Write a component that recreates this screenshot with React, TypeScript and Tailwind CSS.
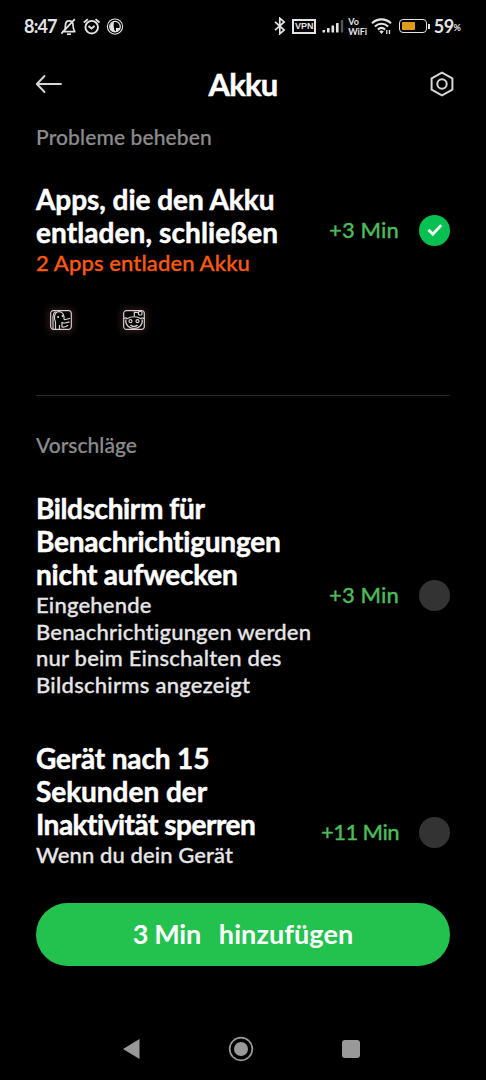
import type { ReactNode } from "react";

function StatusBar() {
  return (
    <div className="flex h-[52px] items-center pl-[24px] pr-[25px] text-[#e4e4e4]">
      <span className="w-[36px] text-[18px] font-bold tracking-[-0.8px]">8:47</span>
      <svg width="66" height="20" viewBox="60 15 66 20" fill="none" stroke="currentColor" strokeWidth="1.7" className="shrink-0">
        <path d="M62 30.600h13.500M64 30.500c1.300-1.600 1.400-3 1.400-5.700 0-3.300 1.200-4.900 3.700-4.900s4 1.600 4 4.900c0 2.700.4 4.100 1.700 5.700M61.300 32.700 74.800 18.200" />
        <path d="M67 33.200h4" strokeWidth="1.700" />
        <circle cx="91.700" cy="26.200" r="6.300" strokeWidth="1.900" />
        <path d="m88.500 25 3 2.500 3-2.500M83.800 21.500l4-3.400M99.500 21.500l-4-3.400" strokeWidth="1.900" />
        <circle cx="115" cy="25.600" r="7.600" strokeWidth="1.100" />
        <circle cx="115" cy="25.600" r="5.300" strokeWidth="1.300" />
        <path d="M114 20.800c-4.500 1.200-5.400 7.500-1 9.800l2.500.4c-2-2.800-2.200-7-1.500-10.200Z" fill="currentColor" stroke="none" />
        <path d="M116 27h4v1.500h-2v2h-2z" fill="currentColor" stroke="none" />
      </svg>
      <div className="ml-auto flex items-center">
        <svg width="12" height="18" viewBox="0 0 12 18" fill="none" stroke="currentColor" strokeWidth="1.700">
          <path d="m1 4.800 9.200 8.200-4.400 3.800V1.200l4.400 3.800L1 13.200" />
        </svg>
        <span className="ml-[6px] flex h-[15px] w-[24px] items-center justify-center border-2 border-current font-['Liberation_Sans'] text-[9px] leading-none font-bold">VPN</span>
        <svg width="22" height="14" viewBox="0 0 22 14" fill="currentColor" className="ml-[6px]">
          <rect x="0.500" y="11" width="2.600" height="2.500" rx="0.500" />
          <rect x="5" y="9" width="2.600" height="4.500" rx="0.500" />
          <rect x="9.500" y="6.500" width="2.600" height="7" rx="0.500" />
          <rect x="14" y="4" width="2.600" height="9.500" rx="0.500" />
          <rect x="18.800" y="1" width="2.400" height="12.500" rx="0.500" fill="#555" />
        </svg>
        <span className="ml-[4px] flex w-[20px] flex-col gap-px text-[9px] leading-[9px] font-bold tracking-[-0.1px]">
          <span>Vo</span>
          <span>WiFi</span>
        </span>
        <svg width="22" height="18" viewBox="0 0 22 18" fill="none" stroke="currentColor" strokeWidth="2.100" className="ml-[3px]">
          <path d="M1 6.300c5.500-5.200 13.500-5.200 19 0M3.900 9.500c3.900-3.600 9.300-3.600 13.200 0M6.900 12.600c2.200-2 5-2 7.200 0" />
          <path d="M8.300 14.500c1.400-1.200 3-1.200 4.400 0L10.500 17z" fill="currentColor" stroke="none" />
          <path d="M15.800 17v-4M18.500 13v4" strokeWidth="1.300" />
        </svg>
        <span className="ml-[6px] flex h-[14px] w-[28px] items-center rounded-[4px] border-[1.5px] border-current pl-[2px]">
          <span className="h-[8px] w-[13px] rounded-[1px] bg-[#e09a20]" />
        </span>
        <span className="ml-[1px] h-[5px] w-[1.5px] bg-current" />
        <span className="ml-[4px] text-[18px] leading-none font-bold tracking-[-0.500px]">59</span>
        <span className="mt-[3px] text-[9px] leading-none font-bold">%</span>
      </div>
    </div>
  );
}

function Header() {
  return (
    <header className="grid h-[64px] grid-cols-[60px_1fr_60px] items-center">
      <svg width="28" height="20" viewBox="0 0 28 20" fill="none" stroke="#d6d6d6" strokeWidth="1.900" strokeLinecap="round" strokeLinejoin="round" className="ml-[35px]">
        <path d="M26 10H2M9.500 2 1.800 10l7.700 8" />
      </svg>
      <h1 className="-mt-px text-center text-[31px] leading-[40px] font-bold tracking-[-0.800px] [-webkit-text-stroke:0.500px_white]">Akku</h1>
      <svg width="26" height="28" viewBox="0 0 26 28" fill="none" stroke="#d6d6d6" strokeWidth="2" strokeLinejoin="round" className="ml-[3px]">
        <path d="M13 2.600 23.400 8.300V19.700L13 25.400 2.600 19.700V8.300Z" />
        <circle cx="13" cy="14" r="4.700" />
      </svg>
    </header>
  );
}

function Toggle({ on = false }: { on?: boolean }) {
  return on ? (
    <span className="flex size-[31px] items-center justify-center rounded-full bg-[#06c152]">
      <svg width="16" height="14" viewBox="0 0 16 14" fill="none" stroke="white" strokeWidth="2.800">
        <path d="m1.500 6.800 4.300 4.400 8.400-9.100" />
      </svg>
    </span>
  ) : (
    <span className="size-[31px] rounded-full bg-[#333]" />
  );
}

function Gain({ children, on }: { children: ReactNode; on?: boolean }) {
  return (
    <div className="flex shrink-0 items-center gap-[20px] text-[22px] leading-[30px] font-medium text-[#4dba5b] [-webkit-text-stroke:0.300px_#4dba5b]">
      {children}
      <Toggle on={on} />
    </div>
  );
}

const title = "text-[28px] leading-[33px] font-bold whitespace-nowrap [-webkit-text-stroke:0.500px_white]";
const body = "mt-px text-[22px] leading-[26.700px] font-medium whitespace-nowrap text-[#e6e6e6] [-webkit-text-stroke:0.300px_#e6e6e6]";
const caption = "text-[21px] leading-[28px] font-medium text-[#8c8c8c] [-webkit-text-stroke:0.200px_#8c8c8c]";

function AppIcons() {
  return (
    <div className="mt-[33px] ml-[14px] flex gap-[51px]">
      <svg width="22" height="20" viewBox="0 0 22 20" fill="none" stroke="#d8d0ce" strokeWidth="1.200" className="rounded-[3px] shadow-[0_0_7px_2px_#2b1a18]">
        <rect x="0.700" y="0.700" width="20.600" height="18.600" rx="2.500" />
        <path d="M5.500 19V12C3.500 8 4.500 3.500 7 2c3-1.200 6.500.5 7 4.500v3M3 19V6.500C3 4 4 2.500 5.500 1.500M14 9.500c2 .3 4-.5 6-1.200M12 12.500c2 1 5 .3 7.500-.6M12 12v5c2 .5 5-.5 6-2M9.500 15v4" />
        <path d="M7.300 7h1.600M11.800 6h1.600" strokeWidth="2" />
      </svg>
      <svg width="22" height="20" viewBox="0 0 22 20" fill="none" stroke="#d8d0ce" strokeWidth="1.200" className="rounded-[3px] shadow-[0_0_7px_2px_#2b1a18]">
        <rect x="0.700" y="0.700" width="20.600" height="18.600" rx="2.500" />
        <path d="M1 8.500c1.500-1 2.500-.5 3 .2 4-2.600 10-2.600 14 0 .8-.8 2-.9 3 0M2.800 9.500C1.500 21.500 20.500 21.500 19.200 9.500M11.300 6.500V2.200l4 .5" />
        <rect x="15.500" y="1.500" width="3.500" height="3.500" rx="1" />
        <circle cx="7.500" cy="11.200" r="1.500" />
        <circle cx="14.500" cy="11.200" r="1.500" />
        <path d="M7.500 15c2 1.800 5 1.800 7 0" strokeWidth="1.600" />
      </svg>
    </div>
  );
}

export default function App() {
  return (
    <div className="flex h-[1080px] w-full flex-col overflow-hidden bg-black font-['Lato',sans-serif] text-white">
      <StatusBar />
      <Header />
      <main className="flex h-[787px] flex-col px-[36px]">
        <h2 className={`mt-[7px] ${caption}`}>
          <span className="tracking-[0.120px]">Probleme beheben</span>
        </h2>
        <section className="mt-[32px] flex items-center justify-between">
          <div className={title}>
            <div className="tracking-[-0.050px]">Apps, die den Akku</div>
            <div className="tracking-[0.090px]">entladen, schließen</div>
            <div className="text-[22px] leading-[28px] font-medium tracking-[0.130px] text-[#fa5a12] [-webkit-text-stroke:0.300px_#fa5a12]">2 Apps entladen Akku</div>
          </div>
          <Gain on>
            <span className="tracking-[0.150px]">+3 Min</span>
          </Gain>
        </section>
        <AppIcons />
        <hr className="mt-[65px] border-[#262626]" />
        <h2 className={`mt-[35px] ${caption}`}>
          <span className="tracking-[0.020px]">Vorschläge</span>
        </h2>
        <section className="mt-[33px] flex items-center justify-between">
          <div className="w-[276px]">
            <div className={title}>
              <div className="tracking-[-0.380px]">Bildschirm für</div>
              <div className="tracking-[-0.210px]">Benachrichtigungen</div>
              <div className="tracking-[-0.230px]">nicht aufwecken</div>
            </div>
            <div className={body}>
              <div className="tracking-[0.200px]">Eingehende</div>
              <div className="tracking-[0.180px]">Benachrichtigungen werden</div>
              <div className="tracking-[0.200px]">nur beim Einschalten des</div>
              <div className="tracking-[0.270px]">Bildschirms angezeigt</div>
            </div>
          </div>
          <Gain>
            <span className="tracking-[0.150px]">+3 Min</span>
          </Gain>
        </section>
        <section className="mt-[43px] flex h-[127px] justify-between">
          <div>
            <div className={title}>
              <div className="tracking-[-0.150px]">Gerät nach 15</div>
              <div className="tracking-[-0.040px]">Sekunden der</div>
              <div className="tracking-[-0.490px]">Inaktivität sperren</div>
            </div>
            <div className={body}>
              <div className="tracking-[0.110px]">Wenn du dein Gerät</div>
            </div>
          </div>
          <div className="mt-[75px] flex h-[31px]">
            <Gain>
              <span className="tracking-[-0.550px]">+11 Min</span>
            </Gain>
          </div>
        </section>
      </main>
      <button className="mx-[36px] flex h-[63px] shrink-0 items-center justify-center gap-[18px] rounded-full bg-[#23c24f] pb-px text-[27px] font-bold">
        <span className="tracking-[-0.300px]">3 Min</span>
        <span className="tracking-[0.100px]">hinzufügen</span>
      </button>
      <nav className="mt-[70px] flex h-[26px] items-center pl-[122px] text-[#999]">
        <svg width="18" height="22" viewBox="0 0 18 22" fill="currentColor">
          <path d="M17.500 1v20L1 11Z" />
        </svg>
        <svg width="26" height="26" viewBox="0 0 26 26" className="ml-[88px]">
          <circle cx="13" cy="13" r="11.300" fill="none" stroke="currentColor" strokeWidth="1.700" />
          <circle cx="13" cy="13" r="7" fill="currentColor" />
        </svg>
        <span className="ml-[88px] size-[18px] rounded-[3px] bg-current" />
      </nav>
    </div>
  );
}
